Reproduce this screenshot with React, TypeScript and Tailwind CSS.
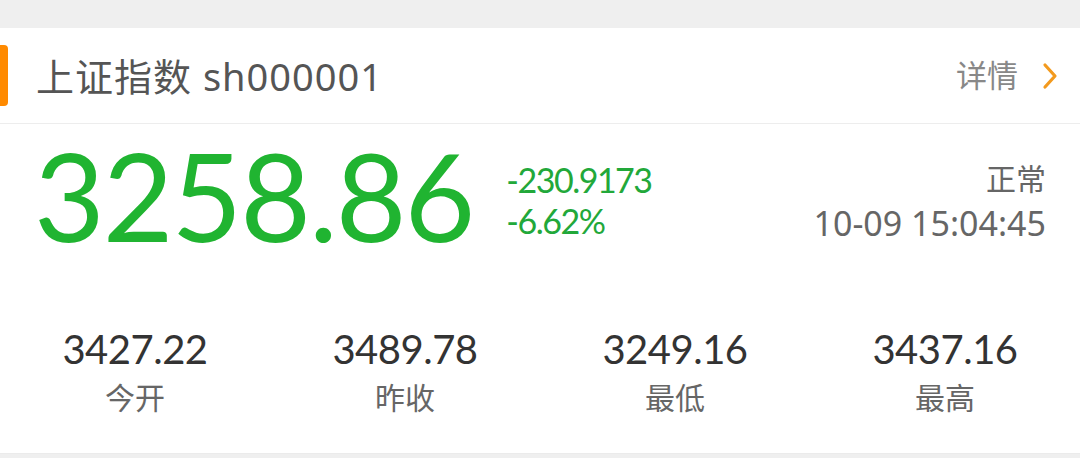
import React from "react";

const stats = [
  { v: "3427.22", l: "今开" },
  { v: "3489.78", l: "昨收" },
  { v: "3249.16", l: "最低" },
  { v: "3437.16", l: "最高" },
];

const num = { fontFamily: "Lato, 'Noto Sans', sans-serif" };
const cjk = { fontFamily: "'Noto Sans', 'Noto Sans CJK SC', sans-serif" };

export default function App() {
  return (
    <div className="w-[1080px] h-[458px] bg-[#efefef] overflow-hidden">
      <div className="h-[28px]" />
      <div className="bg-white border-b border-[#ebebeb] h-[426px] flex flex-col">
        <div className="h-[96px] flex items-center border-b border-[#ededed]">
          <div className="w-[8px] h-[61px] bg-[#ff8a00] rounded-r-[4px]" />
          <div className="ml-[28px] text-[38px] text-[#555555] leading-none tracking-[1px]" style={cjk}>
            上证指数 sh000001
          </div>
          <div className="ml-auto flex items-center">
            <span className="text-[31px] text-[#888888] leading-none" style={cjk}>详情</span>
            <svg className="ml-[24px] mr-[22px]" width="16" height="28" viewBox="0 0 16 28" fill="none">
              <path d="M3 3 L13 14 L3 25" stroke="#f39a1e" strokeWidth="3.2" strokeLinecap="round" strokeLinejoin="round" />
            </svg>
          </div>
        </div>
        <div className="flex items-start pt-[10px] pl-[34px] pr-[34px]">
          <div className="text-[122px] leading-none text-[#20b431] tracking-[-2px]" style={num}>
            3258.86
          </div>
          <div className="ml-[33px] mt-[29px] flex flex-col gap-[7px] text-[#22a83a] text-[34px] leading-none tracking-[-1.5px]" style={num}>
            <span>-230.9173</span>
            <span>-6.62%</span>
          </div>
          <div className="ml-auto mt-[30px] flex flex-col items-end gap-[12px] text-[#666666] leading-none">
            <span className="text-[30px]" style={cjk}>正常</span>
            <span className="text-[34px]" style={cjk}>10-09 15:04:45</span>
          </div>
        </div>
        <div className="grid grid-cols-4 mt-[73px]">
          {stats.map((s) => (
            <div key={s.l} className="flex flex-col items-center">
              <span className="text-[40px] leading-none text-[#333333] tracking-[-0.5px]" style={num}>{s.v}</span>
              <span className="text-[30px] leading-none mt-[14px] text-[#666666]" style={cjk}>{s.l}</span>
            </div>
          ))}
        </div>
      </div>
    </div>
  );
}
